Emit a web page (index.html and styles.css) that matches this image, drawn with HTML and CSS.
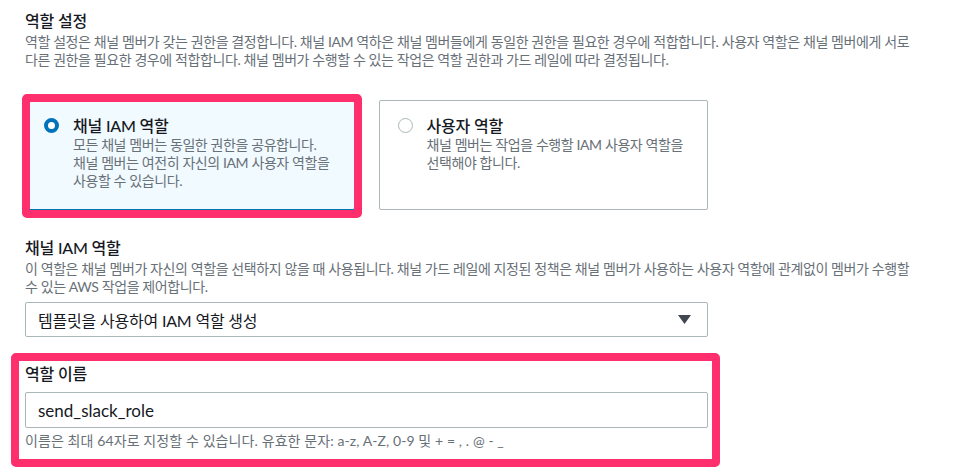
FILE: index.html
```html
<!DOCTYPE html>
<html lang="ko">
<head>
    <meta charset="UTF-8">
    <meta name="viewport" content="width=device-width, initial-scale=1.0">
    <title>역할 설정</title>
    <link rel="stylesheet" href="styles.css">
</head>
<body>
    <main class="page">
        <section class="field">
            <h2 class="field-label">역할 설정</h2>
            <p class="field-desc">역할 설정은 채널 멤버가 갖는 권한을 결정합니다. 채널 IAM 역하은 채널 멤버들에게 동일한 권한을 필요한 경우에 적합합니다. 사용자 역할은 채널 멤버에게 서로 다른 권한을 필요한 경우에 적합합니다. 채널 멤버가 수행할 수 있는 작업은 역할 권한과 가드 레일에 따라 결정됩니다.</p>

            <div class="tiles">
                <label class="tile selected highlight">
                    <input type="radio" name="role" checked>
                    <span class="tile-text">
                        <span class="tile-title">채널 IAM 역할</span>
                        <span class="tile-desc">모든 채널 멤버는 동일한 권한을 공유합니다. 채널 멤버는 여전히 자신의 IAM 사용자 역할을 사용할 수 있습니다.</span>
                    </span>
                </label>
                <label class="tile">
                    <input type="radio" name="role">
                    <span class="tile-text">
                        <span class="tile-title">사용자 역할</span>
                        <span class="tile-desc">채널 멤버는 작업을 수행할 IAM 사용자 역할을 선택해야 합니다.</span>
                    </span>
                </label>
            </div>
        </section>

        <section class="field channel-role">
            <h2 class="field-label">채널 IAM 역할</h2>
            <p class="field-desc">이 역할은 채널 멤버가 자신의 역할을 선택하지 않을 때 사용됩니다. 채널 가드 레일에 지정된 정책은 채널 멤버가 사용하는 사용자 역할에 관계없이 멤버가 수행할 수 있는 AWS 작업을 제어합니다.</p>
            <div class="select">
                <span>템플릿을 사용하여 IAM 역할 생성</span>
                <svg width="13" height="9" viewBox="0 0 13 9"><polygon points="0,0 13,0 6.5,9" fill="#414750"/></svg>
            </div>
        </section>

        <section class="field role-name highlight">
            <label class="field-label" for="role-name">역할 이름</label>
            <input class="text-input" id="role-name" type="text" value="send_slack_role">
            <p class="hint">이름은 최대 64자로 지정할 수 있습니다. 유효한 문자: a-z, A-Z, 0-9 및 + = , . @ - _</p>
        </section>
    </main>
</body>
</html>
```

FILE: styles.css
```css
body {
    margin: 0;
    background-color: white;
    font-family: "Lato", "Noto Sans CJK KR", sans-serif;
    color: #16191f;
    word-break: keep-all;
}
.page {
    padding: 11px 0 18px 25px;
    width: 895px;
}
.field-label {
    display: block;
    margin: 0;
    font-size: 16px;
    line-height: 20px;
    font-weight: 500;
    letter-spacing: -0.2px;
}
.field-desc {
    margin: 2px 0 0 0;
    font-size: 14px;
    line-height: 18px;
    letter-spacing: -0.4px;
    color: #687078;
}

/* 라디오 타일 */
.tiles {
    display: grid;
    grid-template-columns: 1fr 1fr;
    gap: 24px;
    width: 683px;
    margin-top: 31px;
}
.tile {
    position: relative;
    display: flex;
    gap: 14px;
    padding: 15px 14px 19px 18px;
    border: 1px solid #aab7b8;
    border-radius: 2px;
    background-color: white;
}
.tile.selected {
    border-color: #0073bb;
    background-color: #f1faff;
}
.tile input {
    appearance: none;
    flex: none;
    width: 15px;
    height: 15px;
    margin: 2px 0 0 0;
    border: 1.5px solid #aab7b8;
    border-radius: 50%;
    background-color: white;
}
.tile input:checked {
    border: 4px solid #0073bb;
}
.tile-text {
    display: flex;
    flex-direction: column;
}
.tile-title {
    font-size: 16px;
    line-height: 20px;
    font-weight: 500;
    letter-spacing: -0.2px;
}
.tile-desc {
    font-size: 14px;
    line-height: 18px;
    letter-spacing: -0.4px;
    color: #687078;
}

/* 빨간 강조 테두리 */
.highlight {
    position: relative;
}
.highlight::after {
    content: "";
    position: absolute;
    border: 8px solid #ff2f6e;
    border-radius: 5px;
    pointer-events: none;
}
.tile.highlight::after {
    top: -7px;
    left: -4px;
    right: -8px;
    bottom: -9px;
}
.role-name.highlight::after {
    top: -11px;
    left: -14px;
    right: -12px;
    bottom: -17px;
}

.channel-role {
    margin-top: 28px;
}
.select {
    display: flex;
    align-items: center;
    justify-content: space-between;
    box-sizing: border-box;
    width: 683px;
    height: 35px;
    margin-top: 6px;
    padding: 0 16px 0 12px;
    border: 1px solid #aab7b8;
    border-radius: 2px;
    font-size: 16px;
    letter-spacing: -0.2px;
}

.role-name {
    margin-top: 27px;
    width: 683px;
}
.text-input {
    display: block;
    box-sizing: border-box;
    width: 683px;
    height: 36px;
    margin-top: 8px;
    padding: 0 12px;
    border: 1px solid #aab7b8;
    border-radius: 2px;
    font-family: "Lato", "Noto Sans CJK KR", sans-serif;
    font-size: 17px;
    color: #16191f;
}
.hint {
    margin: 4px 0 0 0;
    font-size: 14px;
    line-height: 18px;
    letter-spacing: 0.1px;
    color: #687078;
}
```
